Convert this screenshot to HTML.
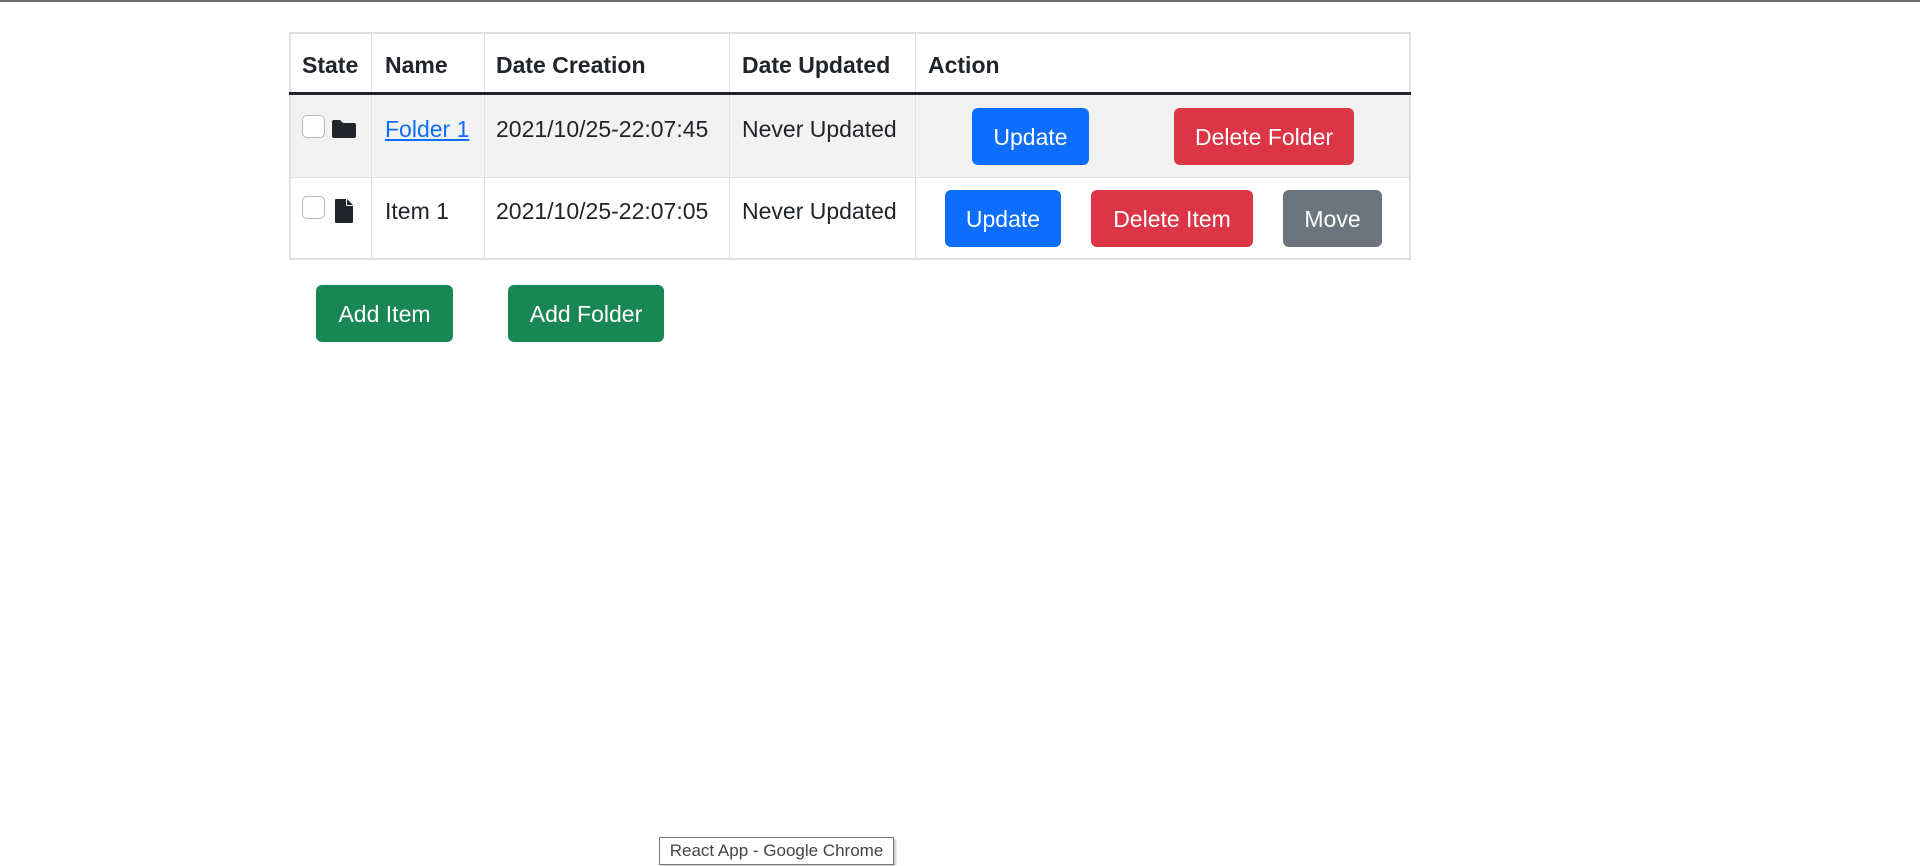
<!DOCTYPE html>
<html><head><meta charset="utf-8"><style>
*{box-sizing:border-box;margin:0;padding:0}
body{width:1920px;height:866px;background:#fff;position:relative;overflow:hidden;font-family:"Liberation Sans",sans-serif;color:#212529;font-size:23px}
.a{position:absolute}
.topline{left:0;top:0;width:1920px;height:2px;background:#6c6c6c}
.tbl{left:289px;top:32px;width:1122px;height:228px;border:2px solid #dee2e6}
.vl{position:absolute;width:1px;background:#dee2e6;top:32px;height:228px}
.hl{position:absolute;left:289px;width:1122px;background:#dee2e6;height:1px}
.th{font-weight:bold;font-size:23px;top:52px}
.td{font-size:23px}
.btn{position:absolute;color:#fff;border-radius:6px;display:flex;align-items:center;justify-content:center;font-size:23px;padding-top:2px}
.blue{background:#0d6efd}.red{background:#dc3545}.gray{background:#6c757d}.green{background:#198754}
.cb{position:absolute;width:23px;height:23px;border:1px solid #b5b9bd;border-radius:5px;background:#fff}
</style></head><body>
<div class="a topline"></div>
<div class="a" style="left:289px;top:94px;width:1122px;height:83px;background:#f2f2f2"></div>
<div class="a tbl"></div>
<div class="vl" style="left:371px"></div>
<div class="vl" style="left:484px"></div>
<div class="vl" style="left:729px"></div>
<div class="vl" style="left:915px"></div>
<div class="a" style="left:289px;top:92px;width:1122px;height:3px;background:#212529"></div>
<div class="hl" style="top:177px"></div>

<div class="a th" style="left:302px">State</div>
<div class="a th" style="left:385px">Name</div>
<div class="a th" style="left:496px">Date Creation</div>
<div class="a th" style="left:742px">Date Updated</div>
<div class="a th" style="left:928px">Action</div>

<div class="cb" style="left:302px;top:115px"></div>
<svg class="a" style="left:331px;top:119px" width="26" height="20" viewBox="0 0 26 20"><path d="M1 3 Q1 1 3 1 H9 L12 4 H23 Q25 4 25 6 V17 Q25 19 23 19 H3 Q1 19 1 17 Z" fill="#212529"/></svg>
<div class="a td" style="left:385px;top:116px;color:#0d6efd;text-decoration:underline">Folder 1</div>
<div class="a td" style="left:496px;top:116px">2021/10/25-22:07:45</div>
<div class="a td" style="left:742px;top:116px">Never Updated</div>
<div class="btn blue" style="left:972px;top:108px;width:117px;height:57px">Update</div>
<div class="btn red" style="left:1174px;top:108px;width:180px;height:57px">Delete Folder</div>

<div class="cb" style="left:302px;top:196px"></div>
<svg class="a" style="left:335px;top:199px" width="18" height="24" viewBox="0 0 18 24"><path d="M0 1 Q0 0 1 0 H11 V6 Q11 7 12 7 H18 V23 Q18 24 17 24 H1 Q0 24 0 23 Z" fill="#212529"/><path d="M12 0 L18 6 H12 Z" fill="#212529"/></svg>
<div class="a td" style="left:385px;top:198px">Item 1</div>
<div class="a td" style="left:496px;top:198px">2021/10/25-22:07:05</div>
<div class="a td" style="left:742px;top:198px">Never Updated</div>
<div class="btn blue" style="left:945px;top:190px;width:116px;height:57px">Update</div>
<div class="btn red" style="left:1091px;top:190px;width:162px;height:57px">Delete Item</div>
<div class="btn gray" style="left:1283px;top:190px;width:99px;height:57px">Move</div>

<div class="btn green" style="left:316px;top:285px;width:137px;height:57px">Add Item</div>
<div class="btn green" style="left:508px;top:285px;width:156px;height:57px">Add Folder</div>

<div class="a" style="left:659px;top:837px;width:235px;height:28px;border:1px solid #777;background:#fff;font-size:17px;color:#444;display:flex;align-items:center;justify-content:center;box-shadow:2px 2px 2px rgba(0,0,0,.2)">React App - Google Chrome</div>
</body></html>
